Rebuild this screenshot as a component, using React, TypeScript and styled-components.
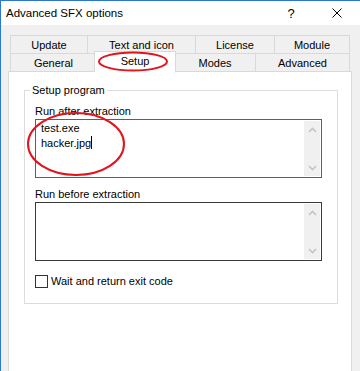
import React from 'react';
import styled, { createGlobalStyle, css } from 'styled-components';

const GlobalStyle = createGlobalStyle`
  html, body {
    margin: 0;
    padding: 0;
    background: #f0f0f0;
  }
  body {
    font-family: "Liberation Sans", Arial, sans-serif;
    font-size: 11px;
    color: #000;
  }
`;

const Window = styled.div`
  position: relative;
  width: 360px;
  height: 371px;
  box-sizing: border-box;
  border-top: 1px solid #2b78d4;
  border-left: 1px solid #2b78d4;
  background: #f0f0f0;
  display: flex;
  flex-direction: column;
  overflow: hidden;
`;

const TitleBar = styled.div`
  height: 24px;
  flex-shrink: 0;
  background: #fff;
  display: flex;
  align-items: center;
  padding-left: 5px;
`;

const Title = styled.div`
  flex: 1;
  font-size: 11.5px;
`;

const CaptionButton = styled.div`
  width: 46px;
  height: 24px;
  display: flex;
  align-items: center;
  justify-content: center;
  font-size: 13px;
`;

const Body = styled.div`
  flex: 1;
  display: flex;
  flex-direction: column;
  padding: 10px 8px 0 7px;
  min-height: 0;
`;

const TabStrip = styled.div`
  padding: 0 2px;
  display: flex;
  flex-direction: column;
`;

const TabRow = styled.div`
  display: flex;
  height: 18px;
`;

const Tab = styled.div<{ $w: number; $selected?: boolean }>`
  width: ${p => p.$w}px;
  height: 18px;
  box-sizing: border-box;
  border-top: 1px solid #d9d9d9;
  border-left: 1px solid #d9d9d9;
  background: #f0f0f0;
  display: flex;
  align-items: center;
  justify-content: center;
  white-space: nowrap;
  &:last-child {
    border-right: 1px solid #d9d9d9;
  }
  ${p => p.$selected && css`
    position: relative;
    z-index: 2;
    width: ${p.$w + 4}px;
    height: 21px;
    margin: -2px -2px 0;
    padding-bottom: 3px;
    background: #fff;
    border-right: 1px solid #d9d9d9;
  `}
`;

const Panel = styled.div`
  flex: 1;
  background: #fff;
  border: 1px solid #d9d9d9;
  border-bottom: none;
  display: flex;
  flex-direction: column;
`;

const Group = styled.fieldset`
  margin: 12px 13px 0 15px;
  padding: 7px 15px 15px 10px;
  border: 1px solid #dcdcdc;
  min-width: 0;
`;

const GroupCaption = styled.legend`
  margin-left: -5px;
  padding: 0 2px;
  line-height: 13px;
`;

const FieldLabel = styled.div<{ $gap?: number }>`
  line-height: 14px;
  margin-top: ${p => p.$gap ?? 0}px;
  margin-bottom: 1px;
`;

const EditBox = styled.div<{ $focused?: boolean }>`
  height: 59px;
  box-sizing: border-box;
  border: 1px solid ${p => (p.$focused ? '#0078d7' : '#3a3a3a')};
  padding: 1px;
  display: flex;
`;

const EditText = styled.div`
  flex: 1;
  padding-left: 4px;
  line-height: 15px;
`;

const Caret = styled.span`
  display: inline-block;
  width: 0;
  height: 13px;
  border-left: 1px solid #000;
  vertical-align: -2px;
`;

const ScrollBar = styled.div`
  width: 16px;
  background: #f0f0f0;
  display: flex;
  flex-direction: column;
  justify-content: space-between;
`;

const ScrollArrow = styled.div`
  height: 17px;
  display: flex;
  align-items: center;
  justify-content: center;
`;

const CheckRow = styled.label`
  margin-top: 13px;
  display: flex;
  align-items: center;
  gap: 3px;
  line-height: 14px;
`;

const CheckBox = styled.span`
  width: 13px;
  height: 13px;
  box-sizing: border-box;
  border: 1px solid #333;
  background: #fff;
`;

const Marks = styled.svg`
  position: absolute;
  z-index: 5;
  top: -1px;
  left: -1px;
  pointer-events: none;
`;

const Chevron = ({ down }: { down?: boolean }) => (
  <svg width="9" height="6" viewBox="0 0 9 6">
    <path
      d={down ? 'M1 1 L4.5 4.5 L8 1' : 'M1 5 L4.5 1.5 L8 5'}
      fill="none"
      stroke="#c4c4c4"
      strokeWidth="1.6"
    />
  </svg>
);

const Scroll = () => (
  <ScrollBar>
    <ScrollArrow><Chevron /></ScrollArrow>
    <ScrollArrow><Chevron down /></ScrollArrow>
  </ScrollBar>
);

const topTabs = [
  { label: 'Update', w: 77 },
  { label: 'Text and icon', w: 108 },
  { label: 'License', w: 79 },
  { label: 'Module', w: 76 },
];

const bottomTabs = [
  { label: 'General', w: 86 },
  { label: 'Setup', w: 78, selected: true },
  { label: 'Modes', w: 81 },
  { label: 'Advanced', w: 95 },
];

function App() {
  return (
    <>
      <GlobalStyle />
      <Window>
        <TitleBar>
          <Title>Advanced SFX options</Title>
          <CaptionButton>?</CaptionButton>
          <CaptionButton>
            <svg width="10" height="10" viewBox="0 0 10 10">
              <path d="M0.5 0.5 L9.5 9.5 M9.5 0.5 L0.5 9.5" stroke="#000" strokeWidth="1" />
            </svg>
          </CaptionButton>
        </TitleBar>
        <Body>
          <TabStrip>
            <TabRow>
              {topTabs.map(t => (
                <Tab key={t.label} $w={t.w}>{t.label}</Tab>
              ))}
            </TabRow>
            <TabRow>
              {bottomTabs.map(t => (
                <Tab key={t.label} $w={t.w} $selected={t.selected}>{t.label}</Tab>
              ))}
            </TabRow>
          </TabStrip>
          <Panel>
            <Group>
              <GroupCaption>Setup program</GroupCaption>
              <FieldLabel>Run after extraction</FieldLabel>
              <EditBox $focused>
                <EditText>
                  test.exe<br />
                  hacker.jpg<Caret />
                </EditText>
                <Scroll />
              </EditBox>
              <FieldLabel $gap={9}>Run before extraction</FieldLabel>
              <EditBox>
                <EditText />
                <Scroll />
              </EditBox>
              <CheckRow>
                <CheckBox />
                Wait and return exit code
              </CheckRow>
            </Group>
          </Panel>
        </Body>
        <Marks width="360" height="371" viewBox="0 0 360 371">
          <ellipse cx="133" cy="61.5" rx="34" ry="9" fill="none" stroke="#e3121b" strokeWidth="2" />
          <ellipse cx="76" cy="144" rx="48" ry="31" fill="none" stroke="#e3121b" strokeWidth="2" />
        </Marks>
      </Window>
    </>
  );
}

export default App;
